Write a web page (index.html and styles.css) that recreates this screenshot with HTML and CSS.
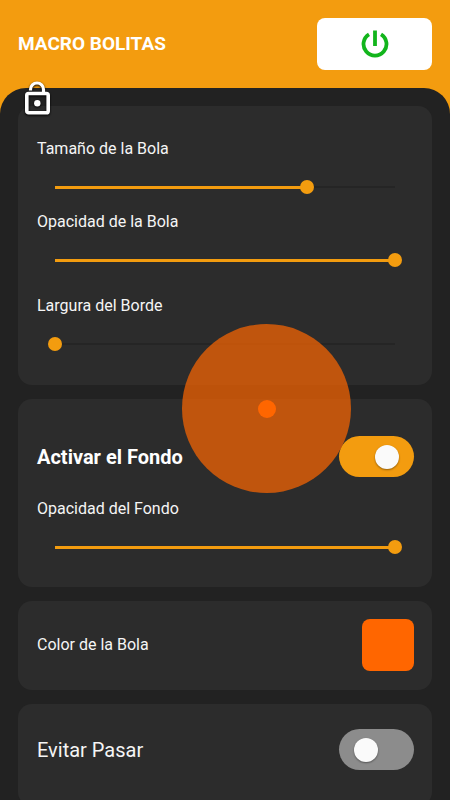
FILE: index.html
```html
<!DOCTYPE html>
<html lang="es">
<head>
<meta charset="utf-8">
<meta name="viewport" content="width=device-width, initial-scale=1">
<title>Macro Bolitas</title>
<link rel="stylesheet" href="styles.css">
</head>
<body>
<header class="header">
  <h1 class="title">MACRO BOLITAS</h1>
  <button class="power" type="button" aria-label="Encender">
    <svg width="28" height="28" viewBox="0 0 28 28" fill="none" stroke="#12b51c" stroke-width="3.800" aria-hidden="true">
      <path d="M14 0.500V16"/>
      <path d="M8 4.300a11.500 11.500 0 1 0 12 0"/>
    </svg>
  </button>
</header>
<main class="sheet">
  <button class="lock" type="button" aria-label="Bloquear">
    <svg width="30" height="38" viewBox="0 0 30 38" fill="none" aria-hidden="true">
      <path d="M8.500 10.500V9.500a6.500 6.500 0 0 1 13 0V14" stroke="#fff" stroke-width="3.200"/>
      <rect x="4.800" y="13.500" width="21.400" height="19.200" rx="1.800" stroke="#fff" stroke-width="3.600"/>
      <circle cx="15.300" cy="23.300" r="3.200" fill="#fff"/>
    </svg>
  </button>
  <section class="card sliders">
    <div class="field">
      <label for="size">Tamaño de la Bola</label>
      <input class="slider" id="size" type="range" min="0" max="100" value="74" style="--value: 0.74">
    </div>
    <div class="field">
      <label for="opacity">Opacidad de la Bola</label>
      <input class="slider" id="opacity" type="range" min="0" max="100" value="100" style="--value: 1">
    </div>
    <div class="field spaced">
      <label for="border">Largura del Borde</label>
      <input class="slider" id="border" type="range" min="0" max="100" value="0" style="--value: 0">
    </div>
  </section>
  <section class="card background">
    <div class="row">
      <label class="large strong" for="background">Activar el Fondo</label>
      <input class="switch" id="background" type="checkbox" role="switch" checked>
    </div>
    <div class="field">
      <label for="background-opacity">Opacidad del Fondo</label>
      <input class="slider" id="background-opacity" type="range" min="0" max="100" value="100" style="--value: 1">
    </div>
  </section>
  <section class="card color">
    <div class="row">
      <label for="color">Color de la Bola</label>
      <input class="swatch" id="color" type="color" value="#ff6600">
    </div>
  </section>
  <section class="card avoid">
    <div class="row">
      <label class="large" for="avoid">Evitar Pasar</label>
      <input class="switch" id="avoid" type="checkbox" role="switch">
    </div>
  </section>
</main>
<div class="ball" aria-hidden="true"></div>
</body>
</html>
```
FILE: styles.css
```css
:root {
  --accent: #f39c0f;
  --ball: #ff6600;
  --sheet: #222222;
  --card: #2c2c2c;
  scrollbar-width: none;
}

* { box-sizing: border-box; }

body {
  margin: 0;
  min-height: 100vh;
  position: relative;
  display: flex;
  flex-direction: column;
  background: var(--accent);
  color: #f5f5f5;
  font-family: Roboto, sans-serif;
  font-size: 16px;
  line-height: 26px;
}

.header {
  display: flex;
  align-items: center;
  justify-content: space-between;
  padding: 18px;
}

.title {
  margin: 0;
  color: #fff;
  font-size: 19px;
  font-weight: 700;
}

.power {
  display: flex;
  align-items: center;
  justify-content: center;
  width: 115px;
  height: 52px;
  padding: 0;
  border: 0;
  border-radius: 8px;
  background: #fff;
}

.sheet {
  position: relative;
  flex: 1;
  display: flex;
  flex-direction: column;
  gap: 14px;
  padding: 18px;
  border-radius: 26px 26px 0 0;
  background: var(--sheet);
}

.lock {
  position: absolute;
  top: -8px;
  left: 22px;
  display: flex;
  padding: 0;
  border: 0;
  background: none;
  filter: drop-shadow(0 1px 1px #000);
}

.card {
  padding: 18px 18px 18px 19px;
  border-radius: 14px;
  background: var(--card);
}

.sliders {
  display: flex;
  flex-direction: column;
  gap: 7px;
  padding-top: 30px;
  padding-bottom: 26px;
}

.background {
  display: flex;
  flex-direction: column;
  gap: 19px;
  padding-top: 37px;
  padding-bottom: 25px;
}

.color { padding-bottom: 19px; }

.avoid {
  padding-top: 25px;
  padding-bottom: 36px;
}

.field {
  display: flex;
  flex-direction: column;
  gap: 10px;
}

.spaced { margin-top: 11px; }

.row {
  display: flex;
  align-items: center;
  justify-content: space-between;
}

.large { font-size: 20px; }

.strong {
  color: #fff;
  font-weight: 700;
}

.slider {
  appearance: none;
  height: 30px;
  margin: 0 12px 0 11px;
  background:
    linear-gradient(var(--accent), var(--accent)) 7px center / calc((100% - 14px) * var(--value)) 3px no-repeat,
    linear-gradient(#252525, #252525) 7px center / calc(100% - 14px) 2px no-repeat;
}

.slider::-webkit-slider-thumb {
  appearance: none;
  width: 14px;
  height: 14px;
  border-radius: 50%;
  background: var(--accent);
}

.switch {
  appearance: none;
  display: flex;
  align-items: center;
  width: 75px;
  height: 41px;
  margin: 0;
  padding: 0 15px;
  border-radius: 21px;
  background: #8c8c8c;
}

.switch::before {
  content: "";
  width: 24px;
  height: 24px;
  border-radius: 50%;
  background: #fafafa;
  box-shadow: 0 1px 2px rgba(0, 0, 0, 0.4);
}

.switch:checked {
  justify-content: flex-end;
  background: var(--accent);
}

.swatch {
  appearance: none;
  width: 52px;
  height: 52px;
  padding: 0;
  border: 0;
  border-radius: 8px;
  background: var(--ball);
  overflow: hidden;
}

.swatch::-webkit-color-swatch-wrapper { padding: 0; }

.swatch::-webkit-color-swatch { border: 0; }

.ball {
  position: absolute;
  top: 324px;
  left: 182px;
  display: grid;
  place-items: center;
  width: 169px;
  height: 169px;
  border-radius: 50%;
  background: rgba(255, 102, 0, 0.7);
  pointer-events: none;
}

.ball::after {
  content: "";
  width: 18px;
  height: 18px;
  border-radius: 50%;
  background: var(--ball);
}
```
